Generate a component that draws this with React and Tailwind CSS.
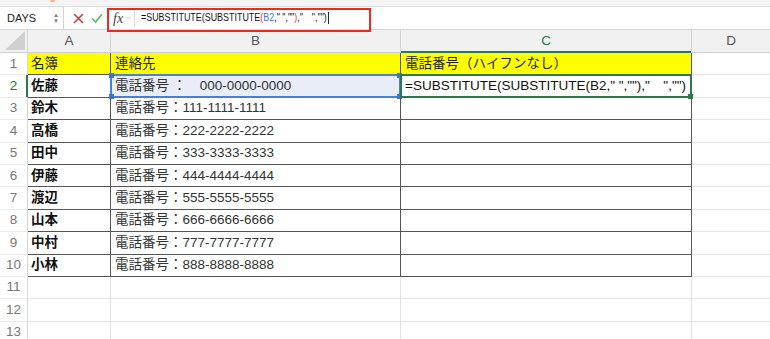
import React from 'react';

const FONT = { fontFamily: "'Liberation Sans', 'Noto Sans CJK JP', sans-serif" };

const rows = [
    ['名簿', '連絡先', '電話番号（ハイフンなし）'],
    ['佐藤', '電話番号 ：　000-0000-0000', '=SUBSTITUTE(SUBSTITUTE(B2," ",""),"　","")'],
    ['鈴木', '電話番号：111-1111-1111', ''],
    ['高橋', '電話番号：222-2222-2222', ''],
    ['田中', '電話番号：333-3333-3333', ''],
    ['伊藤', '電話番号：444-4444-4444', ''],
    ['渡辺', '電話番号：555-5555-5555', ''],
    ['山本', '電話番号：666-6666-6666', ''],
    ['中村', '電話番号：777-7777-7777', ''],
    ['小林', '電話番号：888-8888-8888', ''],
];

const Handle = ({ className, color }) => (
    <span className={`absolute w-[5px] h-[5px] ${color} ${className}`} />
);

const FormulaBar = () => (
    <div className="relative">
        {/* ribbon remnant */}
        <div className="h-[7px] bg-[#f4f4f4] border-b border-[#dcdcdc] relative">
            <span className="absolute left-[50px] top-0 w-[5px] h-[2px] bg-[#f2b48a] rounded-b" />
        </div>
        <div className="h-[23px] flex items-stretch bg-white border-b border-[#d6d6d6]">
            <div className="w-[64px] flex items-center justify-between pl-[7px] pr-[4px] border-r border-[#d4d4d4]">
                <span className="text-[11px] text-[#222]">DAYS</span>
                <div className="flex flex-col items-center leading-none text-[#777]">
                    <span className="text-[6px]">▲</span>
                    <span className="text-[6px]">▼</span>
                </div>
            </div>
            <div className="w-[43px] flex items-center justify-around pl-[5px]">
                <svg width="11" height="11" viewBox="0 0 11 11">
                    <path d="M1.5 1.5L9.5 9.5M9.5 1.5L1.5 9.5" stroke="#e0342c" strokeWidth="1.6" strokeLinecap="round" />
                </svg>
                <svg width="12" height="11" viewBox="0 0 12 11">
                    <path d="M1.5 5.8L4.6 9L10.5 1.8" stroke="#5bb65a" strokeWidth="1.6" fill="none" strokeLinecap="round" strokeLinejoin="round" />
                </svg>
            </div>
            <div className="w-[27px] flex items-center pl-[6px] gap-[3px]">
                <span className="text-[14px] italic text-[#444]" style={{ fontFamily: "'Liberation Serif', serif" }}>fx</span>
                <svg width="5" height="4" viewBox="0 0 5 4">
                    <path d="M0.5 1L2.5 3L4.5 1" stroke="#bbb" strokeWidth="0.8" fill="none" />
                </svg>
            </div>
            <div className="flex-1 flex items-center pl-[6px] border-l border-[#dcdcdc] my-[2px]">
                <div className="flex items-center origin-left scale-x-[0.85]">
                    <span className="text-[10.5px] text-[#111] whitespace-pre">
                        =SUBSTITUTE(SUBSTITUTE<span className="text-[#e0312b]">(</span>
                        <span className="text-[#3d74d6]">B2</span>," ",""<span className="text-[#e0312b]">)</span>,"　","")
                    </span>
                    <span className="w-px h-[12px] bg-black ml-[1px]" />
                </div>
            </div>
        </div>
        {/* annotation box */}
        <div className="absolute left-[107px] top-[8px] w-[264px] h-[24px] border-[2.5px] border-[#ec2a1f] pointer-events-none" />
    </div>
);

const ColHeader = () => (
    <div className="grid grid-cols-[28px_83px_290px_291px_1fr] h-[23px] bg-[#f1f1f1] border-b border-[#cfcfcf] text-[13.5px]">
        <div className="relative border-r border-[#d4d4d4]">
            <svg className="absolute right-[2px] bottom-[2px]" width="20" height="19" viewBox="0 0 20 19">
                <path d="M20 0L20 19L0 19Z" fill="#d0d0d0" />
            </svg>
        </div>
        <div className="flex items-center justify-center text-[#555] border-r border-[#d4d4d4]">A</div>
        <div className="flex items-center justify-center text-[#555] border-r border-[#d4d4d4]">B</div>
        <div className="relative flex items-center justify-center text-[#1e7b46] border-r border-[#d4d4d4]">
            C
            <span className="absolute left-0 right-0 bottom-[-1px] h-[2px] bg-[#2b7a4b]" />
        </div>
        <div className="flex items-center justify-center text-[#555]">D</div>
    </div>
);

const DataRow = ({ n, cells }) => {
    const inTable = n <= 10;
    const line = inTable ? 'border-[#555]' : 'border-[#e3e3e3]';
    const yellow = n === 1 ? 'bg-[#ffff00]' : '';
    const sel = n === 2;
    return (
        <div className="grid grid-cols-[28px_83px_290px_291px_1fr] h-[22.4px] text-[13.5px]">
            <div className={`relative flex items-center justify-center border-b border-[#ececec] border-r ${sel ? 'border-r-[#2b7a4b] text-[#1e7b46]' : 'border-r-[#d6d6d6] text-[#777]'}`}>
                {n}
                {sel && <span className="absolute right-[-1px] top-0 bottom-0 w-[2px] bg-[#2b7a4b]" />}
            </div>
            <div className={`flex items-center pl-[3px] border-b border-r ${line} ${yellow} ${n === 1 ? 'text-[#222]' : 'font-semibold text-[#111]'}`}>
                {cells ? cells[0] : ''}
            </div>
            <div className={`relative flex items-center pl-[4px] border-b border-r whitespace-pre ${line} ${yellow} ${sel ? 'bg-[#e8edf7]' : ''} ${n === 1 ? 'text-[#222]' : 'text-[#333]'}`}>
                {cells ? cells[1] : ''}
                {sel && (
                    <div className="absolute -left-px -top-px -right-px -bottom-px border-2 border-[#4a7fd6]">
                        <Handle color="bg-[#3c74d4]" className="-left-[3px] -top-[3px]" />
                        <Handle color="bg-[#3c74d4]" className="-left-[3px] -bottom-[3px]" />
                        <Handle color="bg-[#3c74d4]" className="-right-[3px] -top-[3px]" />
                        <Handle color="bg-[#3c74d4]" className="-right-[3px] -bottom-[3px]" />
                    </div>
                )}
            </div>
            <div className={`relative flex items-center pl-[4px] border-b border-r whitespace-pre ${line} ${yellow} ${n === 1 ? 'text-[#222]' : 'text-[#111]'}`}>
                {cells ? cells[2] : ''}
                {sel && (
                    <div className="absolute -left-px -top-px -right-px -bottom-px border-2 border-[#2b7a4b]">
                        <Handle color="bg-[#2b7a4b]" className="-right-[3px] -bottom-[3px]" />
                    </div>
                )}
            </div>
            <div className="border-b border-[#e3e3e3]" />
        </div>
    );
};

export default function App() {
    return (
        <div className="w-[770px] h-[339px] overflow-hidden bg-white" style={FONT}>
            <FormulaBar />
            <ColHeader />
            {Array.from({ length: 13 }, (_, i) => (
                <DataRow key={i} n={i + 1} cells={rows[i]} />
            ))}
        </div>
    );
}
